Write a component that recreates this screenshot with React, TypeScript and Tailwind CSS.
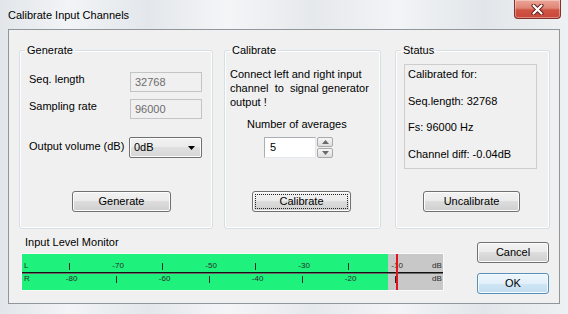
import React from "react";

const btn =
  "h-[21px] rounded-[3px] border border-[#707070] bg-[linear-gradient(#f2f2f2_0%,#ebebeb_50%,#dddddd_50%,#cfcfcf_100%)] shadow-[inset_0_0_0_1px_#fcfcfc] text-[11px] leading-none text-black flex items-center justify-center";

const group =
  "m-0 p-0 h-[185px] rounded-[3px] border border-[#d5dfe5] shadow-[inset_0_0_0_1px_#ffffff] flex flex-col";

const legend = "ml-[5px] px-[2px] leading-[13px] text-black";

function Meter() {
  const pos = (v: number) => 47.3 + (v + 80) * 4.65;
  const topRow: [number, string][] = [
    [-80, "|"],
    [-70, "-70"],
    [-60, "|"],
    [-50, "-50"],
    [-40, "|"],
    [-30, "-30"],
    [-20, "|"],
    [-10, "-10"],
  ];
  const botRow: [number, string][] = [
    [-80, "-80"],
    [-70, "|"],
    [-60, "-60"],
    [-50, "|"],
    [-40, "-40"],
    [-30, "|"],
    [-20, "-20"],
    [-10, "|"],
  ];
  const render = (row: [number, string][], textTop: number, tickTop: number) =>
    row.map(([v, t]) =>
      t === "|" ? (
        <div
          key={`t${v}${textTop}`}
          className="absolute w-[1px] h-[7px] bg-[#2a2a2a]"
          style={{ left: pos(v), top: tickTop }}
        />
      ) : (
        <span
          key={`l${v}${textTop}`}
          className="absolute text-[8px] leading-[10px] text-[#2a2a2a]"
          style={{ left: pos(v) - 3.5, top: textTop }}
        >
          {t}
        </span>
      )
    );
  return (
    <div className="border border-[#fafafa] w-[423px]">
      <div className="relative w-[421px] h-[36px] bg-[#c8c8c8] overflow-hidden">
        <div className="absolute left-0 top-0 bottom-0 w-[366px] bg-[#1ef27c]" />
        <div className="absolute left-0 right-0 top-[18px] h-[1px] bg-[#111]" />
        <div className="absolute left-0 right-0 top-[19px] h-[1px] bg-[#6a6a6a]" />
        <span className="absolute left-[2px] top-[7px] text-[8px] leading-[10px] text-[#2a2a2a]">L</span>
        <span className="absolute left-[2px] top-[20px] text-[8px] leading-[10px] text-[#2a2a2a]">R</span>
        {render(topRow, 7, 9)}
        {render(botRow, 20, 22)}
        <span className="absolute left-[410px] top-[7px] text-[8px] leading-[10px] text-[#2a2a2a]">dB</span>
        <span className="absolute left-[410px] top-[20px] text-[8px] leading-[10px] text-[#2a2a2a]">dB</span>
        <div className="absolute left-[374px] top-0 bottom-0 w-[2px] bg-[#e3141b]" />
      </div>
    </div>
  );
}

function Arrow({ up, color = "#000" }: { up?: boolean; color?: string }) {
  return (
    <svg width="7" height="4" viewBox="0 0 7 4">
      {up ? (
        <polygon points="0,4 7,4 3.5,0" fill={color} />
      ) : (
        <polygon points="0,0 7,0 3.5,4" fill={color} />
      )}
    </svg>
  );
}

export default function App() {
  return (
    <div className="w-[568px] h-[314px] overflow-hidden flex flex-col font-['Liberation_Sans',Arial,sans-serif] text-[11px] text-black bg-[linear-gradient(90deg,#e2e6ea_0%,#f2f4f6_12%,#e3e7eb_26%,#f4f5f7_40%,#e6e9ec_55%,#f2f4f6_70%,#e2e6ea_85%,#eef1f3_100%)]">
      {/* Title bar */}
      <div className="relative h-[29px] shrink-0 flex items-start">
        <span className="ml-[8px] mt-[9px] leading-[13px] text-[11px] text-black">
          Calibrate Input Channels
        </span>
        <div className="absolute right-[7px] top-0 w-[47px] h-[19px] rounded-b-[4px] border border-t-0 border-[#83312a] bg-[linear-gradient(#eba597_0%,#df8676_45%,#cf5443_55%,#c9473a_100%)] shadow-[inset_0_0_0_1px_rgba(255,255,255,0.35)] flex items-center justify-center">
          <svg width="13" height="11" viewBox="0 0 13 11">
            <path d="M2.5 1.5 L10.5 9.5 M10.5 1.5 L2.5 9.5" stroke="#5e1a14" strokeWidth="4" strokeLinecap="round" />
            <path d="M2.5 1.5 L10.5 9.5 M10.5 1.5 L2.5 9.5" stroke="#ffffff" strokeWidth="2.2" strokeLinecap="round" />
          </svg>
        </div>
      </div>

      {/* Client area */}
      <div className="ml-[8px] w-[552px] h-[275px] border border-[#8f969c] bg-[#f0f0f0] flex flex-col">
        {/* Group boxes */}
        <div className="flex pt-[14px] pl-[10px]">
          {/* Generate */}
          <fieldset className={`${group} w-[194px]`}>
            <legend className={legend}>Generate</legend>
            <div className="flex flex-col pl-[9px] pr-[10px]">
              <div className="mt-[15px] flex justify-between items-start">
                <span className="mt-[1px] leading-[13px]">Seq. length</span>
                <div className="w-[72px] h-[20px] border border-[#c2c4c6] bg-[#f0f0f0] pl-[4px] flex items-center text-[#6d6d6d]">
                  32768
                </div>
              </div>
              <div className="mt-[7px] flex justify-between items-start">
                <span className="mt-[1px] leading-[13px]">Sampling rate</span>
                <div className="w-[72px] h-[20px] border border-[#c2c4c6] bg-[#f0f0f0] pl-[4px] flex items-center text-[#6d6d6d]">
                  96000
                </div>
              </div>
              <div className="mt-[18px] flex justify-between items-start">
                <span className="mt-[3px] leading-[13px]">Output volume (dB)</span>
                <div className="w-[73px] h-[21px] rounded-[2px] border border-[#707070] bg-[linear-gradient(#f2f2f2_0%,#ebebeb_50%,#e0e0e0_50%,#d6d6d6_100%)] shadow-[inset_0_0_0_1px_#fcfcfc] pl-[4px] pr-[6px] flex items-center justify-between">
                  <span>0dB</span>
                  <Arrow />
                </div>
              </div>
              <button className={`${btn} mt-[33px] ml-[43px] w-[99px]`}>Generate</button>
            </div>
          </fieldset>

          {/* Calibrate */}
          <fieldset className={`${group} w-[157px] ml-[11px]`}>
            <legend className={legend}>Calibrate</legend>
            <div className="flex flex-col pl-[5px]">
              <p className="mt-[10px] leading-[14px] whitespace-pre">
                {"Connect left and right input\nchannel  to  signal generator\noutput !"}
              </p>
              <span className="mt-[9px] ml-[17px] leading-[13px]">Number of averages</span>
              <div className="mt-[6px] ml-[34px] flex items-start">
                <div className="w-[52px] h-[21px] border border-[#abadb3] border-r-[#e3e9ef] border-b-[#e3e9ef] bg-white pl-[5px] flex items-center text-[11px]">
                  5
                </div>
                <div className="ml-[1px] flex flex-col gap-[1px]">
                  <div className="w-[16px] h-[10px] rounded-[2px] border border-[#a9a9a9] bg-[linear-gradient(#f6f6f6,#dedede)] flex items-center justify-center">
                    <Arrow up color="#6a6a6a" />
                  </div>
                  <div className="w-[16px] h-[10px] rounded-[2px] border border-[#a9a9a9] bg-[linear-gradient(#f6f6f6,#dedede)] flex items-center justify-center">
                    <Arrow color="#6a6a6a" />
                  </div>
                </div>
              </div>
              <button className={`${btn} mt-[33px] ml-[22px] w-[99px] p-[2px]`}>
                <span className="w-full h-full border border-dotted border-[#222] flex items-center justify-center">
                  Calibrate
                </span>
              </button>
            </div>
          </fieldset>

          {/* Status */}
          <fieldset className={`${group} w-[155px] ml-[14px]`}>
            <legend className={legend}>Status</legend>
            <div className="flex flex-col pl-[8px]">
              <div className="mt-[7px] w-[133px] h-[105px] border border-[#cdcdcd] pl-[3px] pt-[3px] flex flex-col gap-[13.6px] leading-[13px]">
                <span>Calibrated for:</span>
                <span>Seq.length: 32768</span>
                <span>Fs: 96000 Hz</span>
                <span>Channel diff: -0.04dB</span>
              </div>
              <button className={`${btn} mt-[22px] ml-[19px] w-[97px]`}>Uncalibrate</button>
            </div>
          </fieldset>
        </div>

        {/* Bottom row */}
        <div className="flex">
          <div className="flex flex-col">
            <span className="mt-[7px] ml-[16px] leading-[13px]">Input Level Monitor</span>
            <div className="mt-[4px] ml-[12px]">
              <Meter />
            </div>
          </div>
          <div className="ml-auto mr-[10px] mt-[13px] flex flex-col gap-[10px]">
            <button className={`${btn} w-[72px]`}>Cancel</button>
            <button className="w-[72px] h-[21px] rounded-[3px] border border-[#5a8fb8] bg-[linear-gradient(#eef6fc_0%,#e2f0fa_50%,#cfe6f5_50%,#c2ddef_100%)] shadow-[inset_0_0_0_1px_#f4fbff] text-[11px] leading-none text-black flex items-center justify-center">
              OK
            </button>
          </div>
        </div>
      </div>
    </div>
  );
}
